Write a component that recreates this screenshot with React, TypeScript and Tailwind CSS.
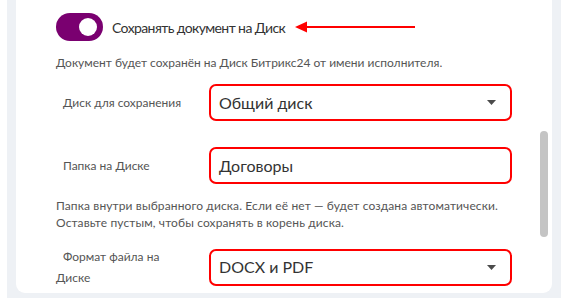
import React from "react";

function Caret() {
  return (
    <svg width="9" height="5" viewBox="0 0 9 5" className="shrink-0">
      <path d="M0 0h9L4.5 5z" fill="#4b4b4b" />
    </svg>
  );
}

function Field({
  label,
  value,
  select,
  className,
}: {
  label: React.ReactNode;
  value: string;
  select?: boolean;
  className?: string;
}) {
  return (
    <div className={["flex items-center", className ?? ""].join(" ")}>
      <div className="w-[153px] text-[12px] leading-[21px] text-[#555]">
        {label}
      </div>
      <div className="flex h-[37px] w-[303px] items-center justify-between rounded-[7px] border-2 border-[#ff0000] bg-white pl-[8px] pr-[14px]">
        <span className="text-[16px] text-[#333]">{value}</span>
        {select && <Caret />}
      </div>
    </div>
  );
}

export default function App() {
  return (
    <div
      className="h-[305px] w-[568px] bg-white pl-[7px]"
      style={{ fontFamily: 'Lato, "Noto Sans", sans-serif' }}
    >
      <div className="h-[298px] w-[554px] bg-[#eef1f5] px-[9px] pb-[5px]">
        <div className="relative flex h-full flex-col rounded-b-[9px] bg-white pl-[40px]">
          {/* toggle row */}
          <div className="mt-[13px] flex items-center">
            <div className="flex h-[28px] w-[47px] items-center justify-end rounded-full bg-[#7a0070] pr-[6px]">
              <div className="h-[18px] w-[18px] rounded-full bg-white" />
            </div>
            <span className="ml-[9px] text-[14px] tracking-[-0.6px] text-[#333]">
              Сохранять документ на Диск
            </span>
            <svg width="122" height="12" viewBox="0 0 122 12" className="ml-[10px]">
              <path d="M10 6H120" stroke="#ff0000" strokeWidth="2" />
              <path d="M0 6L12 0.5V11.5z" fill="#ff0000" />
            </svg>
          </div>

          <p className="mt-[13px] text-[12px] text-[#555]">
            Документ будет сохранён на Диск Битрикс24 от имени исполнителя.
          </p>

          <Field
            className="mt-[12px]"
            label={<span className="pl-[7px]">Диск для сохранения</span>}
            value="Общий диск"
            select
          />
          <Field
            className="mt-[26px]"
            label={<span className="pl-[7px]">Папка на Диске</span>}
            value="Договоры"
          />

          <p className="mt-[13px] text-[12px] leading-[17px] tracking-[0.12px] text-[#555]">
            Папка внутри выбранного диска. Если её нет — будет создана автоматически.
            <br />
            Оставьте пустым, чтобы сохранять в корень диска.
          </p>

          <Field
            className="mt-[15px]"
            label={
              <>
                <span className="pl-[7px]">Формат файла на</span>
                <br />
                Диске
              </>
            }
            value="DOCX и PDF"
            select
          />

          {/* scrollbar */}
          <div className="absolute right-[4px] top-[131px] h-[106px] w-[8px] rounded-full bg-[#c4c4c4]" />
        </div>
      </div>
    </div>
  );
}
